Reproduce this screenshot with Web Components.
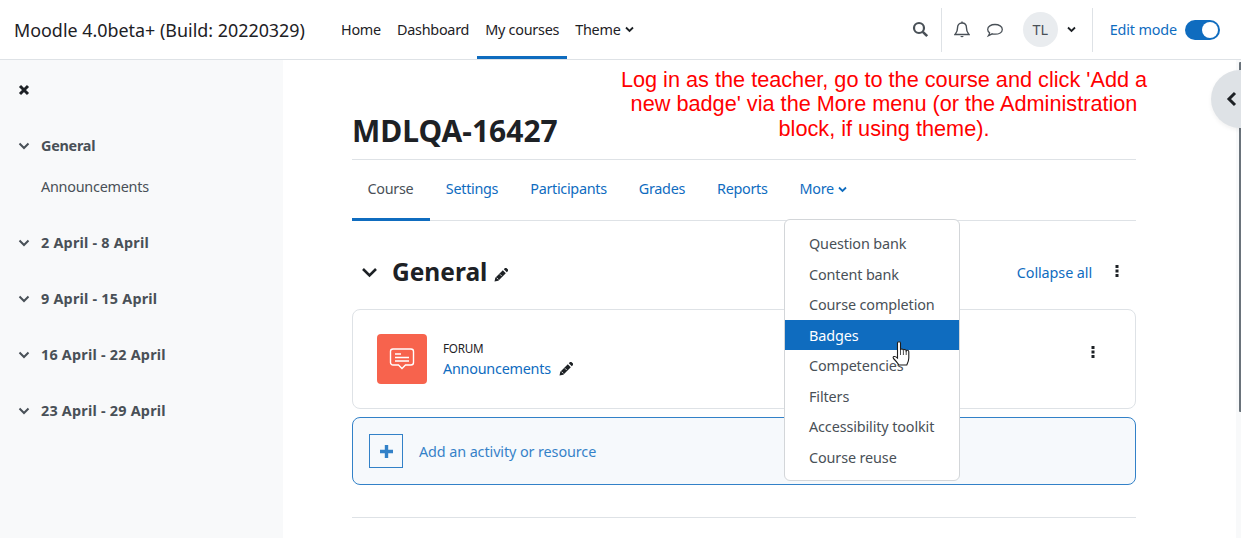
<!DOCTYPE html>
<html>
<head>
<meta charset="utf-8">
<title>MDLQA-16427</title>
<style>
  html, body { margin: 0; height: 100%; }
  body { font-family: "Noto Sans", "Open Sans", sans-serif; color: #1d2125; overflow: hidden; background: #fff; }
</style>
</head>
<body>
<moodle-page></moodle-page>
<script>
const FONT = '"Noto Sans", "Open Sans", sans-serif';

class MoodleNavbar extends HTMLElement {
  constructor() {
    super();
    this.attachShadow({ mode: 'open' });
  }

  connectedCallback() {
    this.shadowRoot.innerHTML = `
      <style>
        :host { display: flex; align-items: stretch; height: 59px; border-bottom: 1px solid #dee2e6; font: 14.4px/20px ${FONT}; letter-spacing: -.15px; color: #1d2125; background: #fff; padding-right: 21px; }
        .brand { font-size: 17.9px; margin-left: 14px; width: 319px; align-self: center; letter-spacing: 0; white-space: nowrap; }
        nav { display: flex; letter-spacing: -.25px; }
        nav a { padding: 0 8px; display: flex; align-items: center; gap: 4px; box-sizing: border-box; border-bottom: 3px solid transparent; padding-top: 3px; }
        nav a.on { border-bottom-color: #0f6cbf; }
        .right { margin-left: auto; display: flex; align-items: center; }
        .sep { width: 1px; height: 44px; background: #dee2e6; }
        .avatar { width: 35px; height: 35px; border-radius: 50%; background: #e9ecef; display: flex; align-items: center; justify-content: center; color: #495057; }
        .edit { color: #0f6cbf; }
        .switch { width: 35px; height: 20px; border-radius: 10px; background: #0f6cbf; position: relative; margin-left: 8px; }
        .switch::after { content: ""; position: absolute; right: 2px; top: 2px; width: 16px; height: 16px; border-radius: 50%; background: #fff; }
        svg { display: block; }
      </style>
      <div class="brand">Moodle 4.0beta+ (Build: 20220329)</div>
      <nav>
        <a>Home</a>
        <a>Dashboard</a>
        <a class="on">My courses</a>
        <a>Theme <svg width="9" height="7" viewBox="0 0 9 7"><path d="M1 1.500l3.500 3.500L8 1.500" fill="none" stroke="#1d2125" stroke-width="1.800"/></svg></a>
      </nav>
      <div class="right">
        <svg width="17" height="17" viewBox="0 0 17 17" style="margin-right:12px"><circle cx="7" cy="7" r="5" fill="none" stroke="#495057" stroke-width="2.200"/><path d="M10.800 10.800l4.400 4.400" stroke="#495057" stroke-width="2.600"/></svg>
        <div class="sep"></div>
        <svg width="16" height="18" viewBox="0 0 16 18" style="margin-left:12px"><path d="M8 2c-3 0-4.500 2-4.500 5 0 4-1.500 5-2.500 6.500h14C14 12 12.500 11 12.500 7 12.500 4 11 2 8 2z" fill="none" stroke="#495057" stroke-width="1.400"/><path d="M6.300 15a1.800 1.800 0 0 0 3.400 0z" fill="#495057"/><path d="M8 .5v1.500" stroke="#495057" stroke-width="1.400"/></svg>
        <svg width="18" height="16" viewBox="0 0 18 16" style="margin-left:16px"><path d="M9 2.500c4 0 7.300 2 7.300 4.900s-3.300 4.800-7.300 4.800c-1 0-2-.1-2.800-.4L2.500 13.700c.6-1 1-2 1.100-3C2.400 9.800 1.700 8.700 1.700 7.400 1.700 4.500 5 2.500 9 2.500z" fill="none" stroke="#495057" stroke-width="1.300"/></svg>
        <div class="avatar" style="margin-left:19px">TL</div>
        <svg width="9" height="7" viewBox="0 0 9 7" style="margin-left:9px"><path d="M1 1.500l3.500 3.500L8 1.500" fill="none" stroke="#1d2125" stroke-width="1.800"/></svg>
        <div class="sep" style="margin-left:16px"></div>
        <span class="edit" style="margin-left:17px">Edit mode</span>
        <div class="switch"></div>
      </div>
    `;
  }
}

class CourseIndex extends HTMLElement {
  constructor() {
    super();
    this.attachShadow({ mode: 'open' });
  }

  connectedCallback() {
    const chevron = '<svg width="12" height="8" viewBox="0 0 12 8"><path d="M1.500 1.500L6 6l4.500-4.500" fill="none" stroke="#495057" stroke-width="2"/></svg>';
    const weeks = ['2 April - 8 April', '9 April - 15 April', '16 April - 22 April', '23 April - 29 April'];
    this.shadowRoot.innerHTML = `
      <style>
        :host { display: block; width: 283px; flex: none; background: #f8f9fa; font: 14.4px/20px ${FONT}; letter-spacing: -.25px; color: #495057; box-sizing: border-box; padding: 21px 0 0 18px; }
        .close { height: 18px; margin-bottom: 37px; }
        .sec { display: flex; align-items: center; gap: 11px; font-weight: 700; height: 20px; margin-bottom: 36px; }
        .sec.week { letter-spacing: .22px; }
        .item { margin: -15px 0 36px 23px; }
        svg { display: block; }
      </style>
      <div class="close"><svg width="12" height="18" viewBox="0 0 12 18"><path d="M2 5l8 8M10 5l-8 8" stroke="#1d2125" stroke-width="3"/></svg></div>
      <div class="sec">${chevron}General</div>
      <div class="item">Announcements</div>
      ${weeks.map((w) => `<div class="sec week">${chevron}${w}</div>`).join('')}
    `;
  }
}

class CourseTabs extends HTMLElement {
  constructor() {
    super();
    this.attachShadow({ mode: 'open' });
  }

  connectedCallback() {
    this.shadowRoot.innerHTML = `
      <style>
        :host { display: flex; height: 60px; border-bottom: 1px solid #dee2e6; font: 14.4px/20px ${FONT}; letter-spacing: -.3px; color: #0f6cbf; }
        a { padding: 0 16px; display: flex; align-items: center; gap: 4px; box-sizing: border-box; border-bottom: 3px solid transparent; margin-bottom: -1px; height: 61px; }
        a.on { border-bottom-color: #0f6cbf; color: #495057; padding: 0 16.500px 0 15.500px; }
      </style>
      <a class="on">Course</a><a>Settings</a><a>Participants</a><a>Grades</a><a>Reports</a>
      <a>More <svg width="9" height="7" viewBox="0 0 9 7"><path d="M1 1.500l3.500 3.500L8 1.500" fill="none" stroke="#0f6cbf" stroke-width="1.800"/></svg></a>
    `;
  }
}

class MoreMenu extends HTMLElement {
  constructor() {
    super();
    this.attachShadow({ mode: 'open' });
  }

  connectedCallback() {
    const items = ['Question bank', 'Content bank', 'Course completion', 'Badges', 'Competencies', 'Filters', 'Accessibility toolkit', 'Course reuse'];
    this.shadowRoot.innerHTML = `
      <style>
        :host { position: absolute; left: 784px; top: 219px; width: 176px; box-sizing: border-box; background: #fff; border: 1px solid #d3d6d9; border-radius: 6px; padding: 8px 0; font: 14.4px/20.500px ${FONT}; letter-spacing: -.12px; color: #495057; }
        div { padding: 6px 24px 4px; height: 20.500px; white-space: nowrap; }
        .active { background: #0f6cbf; color: #fff; }
      </style>
      ${items.map((i) => `<div class="${i === 'Badges' ? 'active' : ''}">${i}</div>`).join('')}
    `;
  }
}

class ActivityCard extends HTMLElement {
  constructor() {
    super();
    this.attachShadow({ mode: 'open' });
  }

  connectedCallback() {
    this.shadowRoot.innerHTML = `
      <style>
        :host { display: flex; align-items: center; height: 100px; box-sizing: border-box; border: 1px solid #dee2e6; border-radius: 8px; padding: 0 24px; gap: 16px; font: 14.4px/20px ${FONT}; letter-spacing: -.25px; }
        .icon { width: 50px; height: 50px; border-radius: 4px; background: #f7634d; display: flex; align-items: center; justify-content: center; }
        .info { margin-top: 1px; }
        .type { font-size: 11.700px; line-height: 16px; color: #1d2125; text-transform: uppercase; }
        .name { color: #0f6cbf; display: flex; align-items: center; gap: 8px; margin-top: 3px; }
        .kebab { margin-left: auto; margin-right: 16px; margin-top: -14px; }
        svg { display: block; }
      </style>
      <div class="icon">
        <svg width="26" height="24" viewBox="0 0 26 24"><path d="M4 2h18a2.500 2.500 0 0 1 2.500 2.500v11a2.500 2.500 0 0 1-2.500 2.500h-5.500L13 21.500 9.500 18H4a2.500 2.500 0 0 1-2.500-2.500v-11A2.500 2.500 0 0 1 4 2z" fill="none" stroke="#fff" stroke-width="1.400"/><path d="M6 7h6M6 10.500h14M6 14h14" stroke="#fff" stroke-width="1.400"/></svg>
      </div>
      <div class="info">
        <div class="type">Forum</div>
        <div class="name">Announcements <pencil-icon size="14"></pencil-icon></div>
      </div>
      <svg class="kebab" width="4" height="12" viewBox="0 0 4 12"><path d="M.5 0h3v3h-3zM.5 4.500h3v3h-3zM.5 9h3v3h-3z" fill="#1d2125"/></svg>
    `;
  }
}

class PencilIcon extends HTMLElement {
  constructor() {
    super();
    this.attachShadow({ mode: 'open' });
  }

  connectedCallback() {
    const size = this.getAttribute('size') || '14';
    this.shadowRoot.innerHTML = `
      <style>:host { display: inline-block; line-height: 0; }</style>
      <svg width="${size}" height="${size}" viewBox="0 0 14 14"><path d="M.5 13.500l.8-3.800 7.500-7.500 3 3-7.500 7.500zM9.800 1.200L11 0c.4-.4 1-.4 1.400 0l1.600 1.600c.4.4.4 1 0 1.400l-1.200 1.200z" fill="#1d2125"/><path d="M2.600 9.700l1.700 1.700M6 6.300l1.700 1.700" stroke="#fff" stroke-width=".8"/></svg>
    `;
  }
}

class MoodlePage extends HTMLElement {
  constructor() {
    super();
    this.attachShadow({ mode: 'open' });
  }

  connectedCallback() {
    this.shadowRoot.innerHTML = `
      <style>
        :host { display: block; position: relative; width: 1241px; height: 538px; overflow: hidden; font-family: ${FONT}; }
        .wrap { display: flex; height: 479px; }
        main { padding: 52px 0 0 69px; width: 784px; flex: none; }
        h1 { margin: 0; height: 47px; font-size: 30px; line-height: 38px; font-weight: 700; color: #1d2125; border-bottom: 1px solid #dee2e6; }
        .sechead { display: flex; align-items: center; margin-top: 31px; height: 40px; color: #1d2125; }
        .sechead h2 { margin: 0 7px 0 14px; font-size: 24.500px; line-height: 32px; font-weight: 700; }
        .sechead pencil-icon { margin-top: 5px; }
        .collapse { margin-left: auto; color: #0f6cbf; font-size: 14.400px; letter-spacing: -.1px; }
        activity-card { margin-top: 17px; }
        .add { display: flex; align-items: center; height: 68px; margin-top: 8px; box-sizing: border-box; border: 1px solid #0f6cbf; border-radius: 8px; background: #f5f9fc; padding-left: 16px; color: #0f6cbf; font-size: 14.400px; letter-spacing: -.1px; opacity: .85; gap: 16px; }
        .plus { width: 34px; height: 34px; box-sizing: border-box; border: 1px solid #0f6cbf; display: flex; align-items: center; justify-content: center; }
        hr { border: 0; border-top: 1px solid #dee2e6; margin: 32px 0 0; }
        .note { position: absolute; left: 584px; top: 68px; width: 600px; text-align: center; color: #f00; font: 21.700px/24.400px "Liberation Sans", Arial, sans-serif; }
        .strip { position: absolute; right: 0; top: 60px; bottom: 0; width: 5px; background: #f8f9fa; }
        .scroll { position: absolute; right: 0; top: 62px; width: 2px; height: 350px; background: #6a737b; border-radius: 1px 0 0 1px; }
        .drawer { position: absolute; right: -28px; top: 70px; width: 58px; height: 58px; border-radius: 50%; background: #dee2e6; display: flex; align-items: center; padding-left: 15px; box-sizing: border-box; box-shadow: 0 2px 4px rgba(0,0,0,.06); }
        .cursor { position: absolute; left: 892px; top: 341px; }
        svg { display: block; }
      </style>
      <moodle-navbar></moodle-navbar>
      <div class="wrap">
        <course-index></course-index>
        <main>
          <h1>MDLQA-16427</h1>
          <course-tabs></course-tabs>
          <div class="sechead">
            <svg width="17" height="11" viewBox="0 0 17 11" style="margin-left:9px"><path d="M2 2l6.500 6.500L15 2" fill="none" stroke="#1d2125" stroke-width="2.600"/></svg>
            <h2>General</h2>
            <pencil-icon size="14"></pencil-icon>
            <span class="collapse">Collapse all</span>
            <svg width="4" height="12" viewBox="0 0 4 12" style="margin:-2px 17px 0 23px"><path d="M.5 0h3v3h-3zM.5 4.500h3v3h-3zM.5 9h3v3h-3z" fill="#1d2125"/></svg>
          </div>
          <activity-card></activity-card>
          <div class="add">
            <span class="plus"><svg width="13" height="13" viewBox="0 0 13 13"><path d="M6.500 0v13M0 6.500h13" stroke="#0f6cbf" stroke-width="3.400"/></svg></span>
            Add an activity or resource
          </div>
          <hr>
        </main>
      </div>
      <div class="note">Log in as the teacher, go to the course and click 'Add a<br>new badge' via the More menu (or the Administration<br>block, if using theme).</div>
      <div class="strip"></div>
      <div class="scroll"></div>
      <div class="drawer"><svg width="11" height="16" viewBox="0 0 11 16"><path d="M9 2L3 8l6 6" fill="none" stroke="#1d2125" stroke-width="3"/></svg></div>
      <more-menu></more-menu>
      <svg class="cursor" width="19" height="26" viewBox="0 0 19 26"><path d="M5.500 2c0-1.600 3-1.600 3 0V9c.3-1.300 2.600-1.300 2.900.3.300-1.200 2.500-1 2.800.5.400-.9 2.600-.7 2.600 1V17c0 3-1 5-2 7H7c-1.500-2-3-4-5.500-6.500-1.300-1.600.9-3.300 4-.5z" fill="#fff" stroke="#1d1d1d" stroke-width="1.100"/><path d="M8.500 9v5M11.400 9.500v4.500M14.200 10v4" stroke="#1d1d1d" stroke-width=".8"/></svg>
    `;
  }
}

customElements.define('pencil-icon', PencilIcon);
customElements.define('moodle-navbar', MoodleNavbar);
customElements.define('course-index', CourseIndex);
customElements.define('course-tabs', CourseTabs);
customElements.define('more-menu', MoreMenu);
customElements.define('activity-card', ActivityCard);
customElements.define('moodle-page', MoodlePage);
</script>
</body>
</html>
